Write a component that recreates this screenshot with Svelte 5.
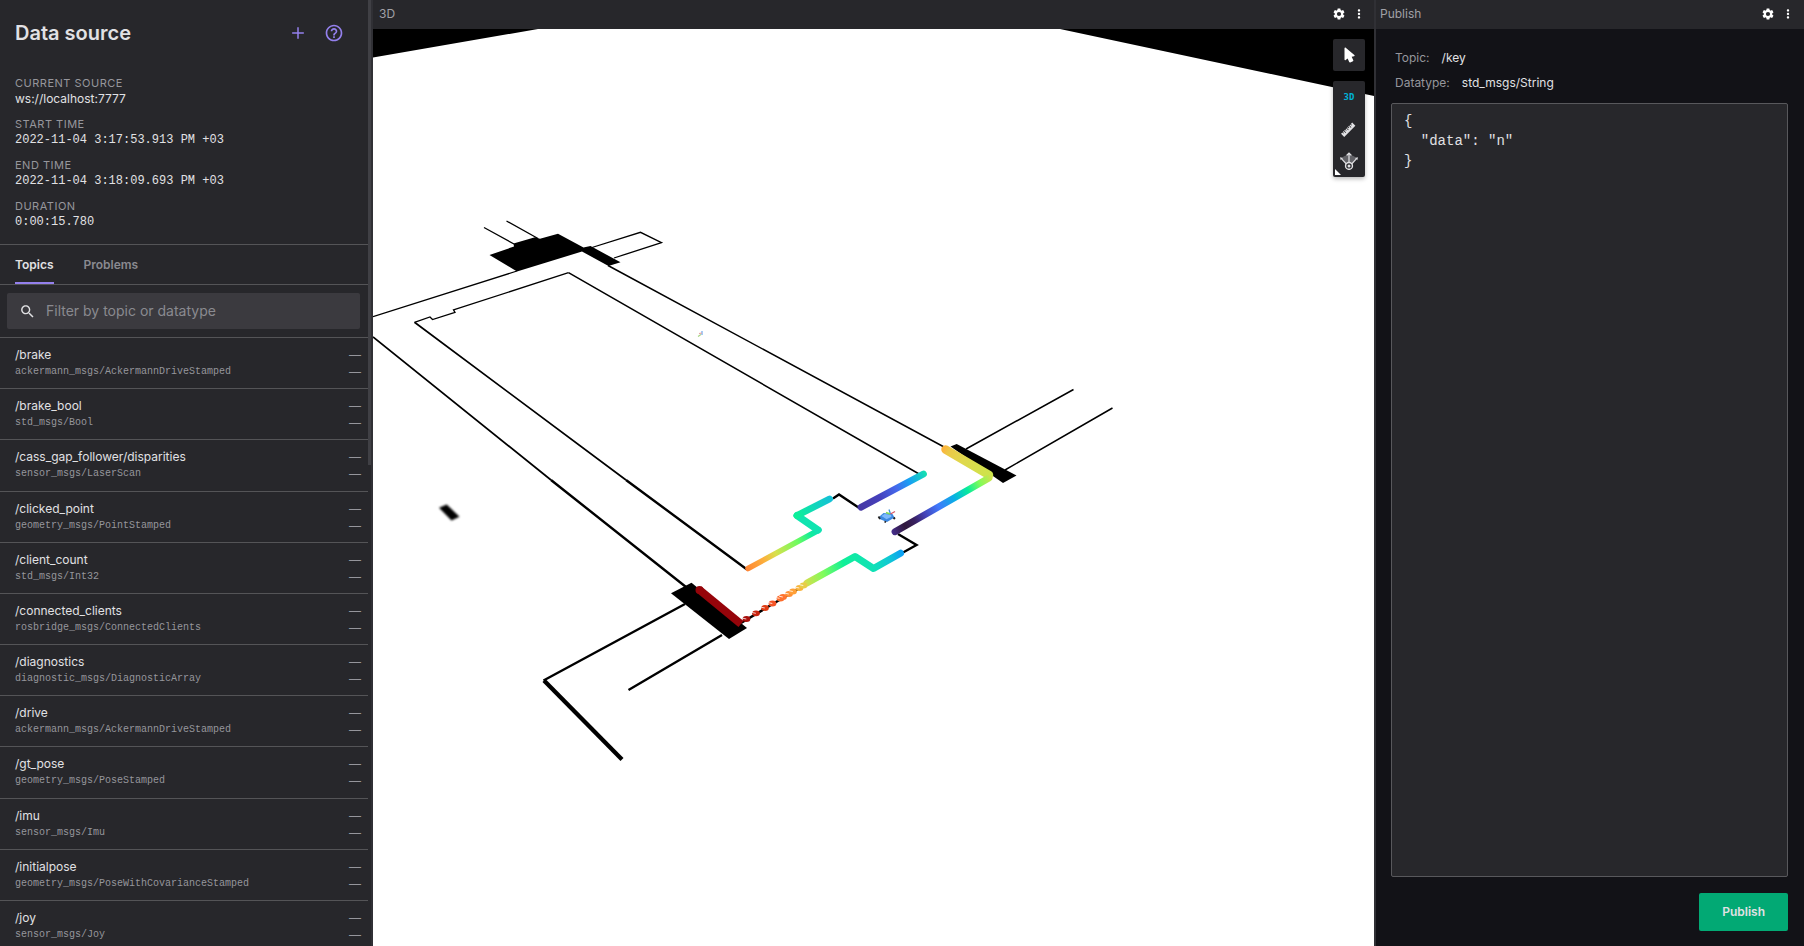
<script>
  const sourceInfo = [
    { label: 'Current source', value: 'ws://localhost:7777', mono: false },
    { label: 'Start time', value: '2022-11-04 3:17:53.913 PM +03', mono: true },
    { label: 'End time', value: '2022-11-04 3:18:09.693 PM +03', mono: true },
    { label: 'Duration', value: '0:00:15.780', mono: true }
  ];

  const topics = [
    ['/brake', 'ackermann_msgs/AckermannDriveStamped'],
    ['/brake_bool', 'std_msgs/Bool'],
    ['/cass_gap_follower/disparities', 'sensor_msgs/LaserScan'],
    ['/clicked_point', 'geometry_msgs/PointStamped'],
    ['/client_count', 'std_msgs/Int32'],
    ['/connected_clients', 'rosbridge_msgs/ConnectedClients'],
    ['/diagnostics', 'diagnostic_msgs/DiagnosticArray'],
    ['/drive', 'ackermann_msgs/AckermannDriveStamped'],
    ['/gt_pose', 'geometry_msgs/PoseStamped'],
    ['/imu', 'sensor_msgs/Imu'],
    ['/initialpose', 'geometry_msgs/PoseWithCovarianceStamped'],
    ['/joy', 'sensor_msgs/Joy']
  ];

  // Sparse laser returns along the far wall: x, y, colour
  const scanDots = [
    [746.5, 619, '#a8100c'], [756, 613.3, '#c82410'], [765, 608, '#e03c14'],
    [772.5, 603.5, '#f45426'], [780.5, 598.5, '#fc6c2c'], [783, 597, '#ff7430'],
    [789, 594, '#ff9036'], [793, 591.5, '#ffa038'], [799.5, 588, '#f8b43c'],
    [803.5, 585.5, '#e8cc48']
  ];

  let filter = $state('');
  let message = $state('{\n  "data": "n"\n}');
</script>

{#snippet gear()}
  <svg class="ic14" viewBox="0 0 24 24" aria-hidden="true"><path d="M19.14 12.94c.04-.3.06-.61.06-.94 0-.32-.02-.64-.07-.94l2.03-1.58c.18-.14.23-.41.12-.61l-1.92-3.32c-.12-.22-.37-.29-.59-.22l-2.39.96c-.5-.38-1.03-.7-1.62-.94l-.36-2.54c-.04-.24-.24-.41-.48-.41h-3.84c-.24 0-.43.17-.47.41l-.36 2.54c-.59.24-1.13.57-1.62.94l-2.39-.96c-.22-.08-.47 0-.59.22L2.74 8.87c-.12.21-.08.47.12.61l2.03 1.58c-.05.3-.09.63-.09.94s.02.64.07.94l-2.03 1.58c-.18.14-.23.41-.12.61l1.92 3.32c.12.22.37.29.59.22l2.39-.96c.5.38 1.03.7 1.62.94l.36 2.54c.05.24.24.41.48.41h3.84c.24 0 .44-.17.47-.41l.36-2.54c.59-.24 1.13-.56 1.62-.94l2.39.96c.22.08.47 0 .59-.22l1.92-3.32c.12-.22.07-.47-.12-.61l-2.01-1.58zM12 15.6A3.6 3.6 0 1 1 12 8.4a3.6 3.6 0 0 1 0 7.2z"/></svg>
{/snippet}

{#snippet dots()}
  <svg class="ic14" viewBox="0 0 24 24" aria-hidden="true"><path d="M12 8c1.100 0 2-.9 2-2s-.9-2-2-2-2 .9-2 2 .9 2 2 2zm0 2c-1.100 0-2 .9-2 2s.9 2 2 2 2-.9 2-2-.9-2-2-2zm0 6c-1.100 0-2 .9-2 2s.9 2 2 2 2-.9 2-2-.9-2-2-2z"/></svg>
{/snippet}

{#snippet panelBar(title)}
  <header class="bar">
    <h2>{title}</h2>
    <button aria-label="{title} settings">{@render gear()}</button>
    <button aria-label="{title} menu">{@render dots()}</button>
  </header>
{/snippet}

<div class="shell">
  <aside class="sidebar">
    <div class="content">
      <header class="title">
        <h1>Data source</h1>
        <button aria-label="Add source">
          <svg class="ic20" viewBox="0 0 24 24" aria-hidden="true"><path d="M19 12.900h-6.100V19h-1.800v-6.100H5v-1.800h6.100V5h1.800v6.100H19z"/></svg>
        </button>
        <button aria-label="Help">
          <svg class="ic20" viewBox="0 0 24 24" aria-hidden="true"><path d="M11 18h2v-2h-2v2zm1-16C6.480 2 2 6.480 2 12s4.480 10 10 10 10-4.480 10-10S17.520 2 12 2zm0 18c-4.410 0-8-3.590-8-8s3.590-8 8-8 8 3.590 8 8-3.590 8-8 8zm0-14c-2.210 0-4 1.790-4 4h2c0-1.100.9-2 2-2s2 .9 2 2c0 2-3 1.750-3 5h2c0-2.250 3-2.500 3-5 0-2.210-1.790-4-4-4z"/></svg>
        </button>
      </header>

      <dl class="info">
        {#each sourceInfo as item}
          <div>
            <dt>{item.label}</dt>
            <dd class:mono={item.mono}>{item.value}</dd>
          </div>
        {/each}
      </dl>

      <div class="tabs" role="tablist">
        <button role="tab" aria-selected="true" class="active">Topics</button>
        <button role="tab" aria-selected="false">Problems</button>
      </div>

      <div class="filter">
        <label>
          <svg class="search" viewBox="0 0 24 24" aria-hidden="true"><path d="M15.500 14h-.790l-.280-.270C15.410 12.590 16 11.110 16 9.500 16 5.910 13.090 3 9.500 3S3 5.910 3 9.500 5.910 16 9.500 16c1.610 0 3.090-.590 4.230-1.570l.270.280v.790l5 4.990L20.490 19l-4.990-5zm-6 0C7.010 14 5 11.990 5 9.500S7.010 5 9.500 5 14 7.010 14 9.500 11.990 14 9.500 14z"/></svg>
          <input type="text" placeholder="Filter by topic or datatype" aria-label="Filter by topic or datatype" bind:value={filter} />
        </label>
      </div>

      <ul class="topics">
        {#each topics as [name, type]}
          <li>
            <div class="names">
              <span class="name">{name}</span>
              <span class="type">{type}</span>
            </div>
            <div class="stats"><span>—</span><span>—</span></div>
          </li>
        {/each}
      </ul>
    </div>
    <div class="rail"><div class="thumb"></div></div>
  </aside>

  <main class="panel">
    {@render panelBar('3D')}
    <div class="stage">
      <svg class="scene" viewBox="373 29 1001 917" preserveAspectRatio="xMidYMid slice" role="img" aria-label="Map with laser scan">
        <defs>
          <linearGradient id="near" gradientUnits="userSpaceOnUse" x1="860" y1="508" x2="926" y2="473">
            <stop offset="0" stop-color="#4638a4"/><stop offset=".3" stop-color="#4540bc"/><stop offset=".55" stop-color="#4468ec"/><stop offset=".75" stop-color="#18a0f4"/><stop offset="1" stop-color="#14e0b0"/>
          </linearGradient>
          <linearGradient id="right" gradientUnits="userSpaceOnUse" x1="893" y1="533" x2="992" y2="477">
            <stop offset="0" stop-color="#442c88"/><stop offset=".12" stop-color="#30183c"/><stop offset=".22" stop-color="#382060"/><stop offset=".32" stop-color="#4440b4"/><stop offset=".46" stop-color="#4078fc"/><stop offset=".62" stop-color="#08b0e4"/><stop offset=".76" stop-color="#08ec9c"/><stop offset=".88" stop-color="#80fc58"/><stop offset="1" stop-color="#d4e04c"/>
          </linearGradient>
          <linearGradient id="top" gradientUnits="userSpaceOnUse" x1="944" y1="448" x2="992" y2="476">
            <stop offset="0" stop-color="#fcb43c"/><stop offset=".1" stop-color="#ecc848"/><stop offset=".4" stop-color="#e0d84c"/><stop offset="1" stop-color="#cce44c"/>
          </linearGradient>
          <linearGradient id="left" gradientUnits="userSpaceOnUse" x1="746" y1="569" x2="820" y2="530">
            <stop offset="0" stop-color="#ff8434"/><stop offset=".24" stop-color="#fcb03c"/><stop offset=".4" stop-color="#d8e04c"/><stop offset=".7" stop-color="#6cfc60"/><stop offset=".88" stop-color="#10ec9c"/><stop offset="1" stop-color="#10dcbc"/>
          </linearGradient>
          <linearGradient id="jog" gradientUnits="userSpaceOnUse" x1="796" y1="516" x2="832" y2="499">
            <stop offset="0" stop-color="#0cf098"/><stop offset="1" stop-color="#14c0d8"/>
          </linearGradient>
          <linearGradient id="low" gradientUnits="userSpaceOnUse" x1="805" y1="584" x2="902" y2="553">
            <stop offset="0" stop-color="#d8dc4c"/><stop offset=".2" stop-color="#80fc5c"/><stop offset=".42" stop-color="#10f098"/><stop offset=".7" stop-color="#10e0b8"/><stop offset=".86" stop-color="#10c8d4"/><stop offset="1" stop-color="#0ca0f4"/>
          </linearGradient>
          <filter id="soft"><feGaussianBlur stdDeviation=".8"/></filter>
        </defs>
        <rect x="-1000" y="-1000" width="4000" height="4000" fill="#fff"/>
        <path d="M-1000 29V290L373 57.500 538 29zM1060 29L1374 96 3000 441V29z"/>

        <g fill="none" stroke="#000">
          <path stroke-width="1.300" d="M484 227.500L514 244M506.500 221L538 238.500M592 247.500L640.500 232.300 661.500 242.700 614 258M373 316.700L517 271M414.500 322.300L430 317l2.500 2.500L455 312.300l-1.500-2.500L568.500 272.700"/>
          <path stroke-width="1.500" d="M568.500 272.700L920 474.500M608 265.500L945 447.500M966 449L1073.500 389.500M1005 470L1112.500 408"/>
          <path stroke-width="1.700" d="M414.500 322.300L626 480M373 337L551 480"/>
          <path stroke-width="2.400" d="M626 480L747 569.500M551 480L686 587M833 498.500L839 494.500 858.500 507.500M903 552.500L916.500 545 898 534M685 604L543.500 680.500M722 635L628.500 690M741 623L808 583"/>
          <path stroke-width="4.300" d="M544 680.500L622 759.500"/>
        </g>
        <path d="M489.500 255L514 246.500 513.500 243.500 535 237.300 540 238.700 558 233.700 583.500 247.500 590.500 246 620.500 262.300 608.500 266 582 251.500 517 271.500z"/>
        <path d="M950.500 446.500L956.700 444 1016.500 475.500 1003 483z"/>
        <path d="M671 593.300L691.500 582.700 747 628 729 639z"/>
        <path filter="url(#soft)" d="M439 507.700L446.700 504.500 459.500 516.700 451.500 520.500z"/>

        <g fill="none" stroke-linecap="round" stroke-linejoin="round">
          <path stroke="#96040a" stroke-width="8" stroke-linecap="butt" d="M699 589.500L741 624"/>
          <circle cx="699.500" cy="590" r="4" fill="#96040a"/>
          <path stroke="url(#left)" stroke-width="5.500" d="M748 568.500L819 530"/>
          <path stroke="#10e4b0" stroke-width="7" d="M797 515.500L818 530"/>
          <path stroke="url(#jog)" stroke-width="6.800" d="M797 515.500L829.500 499"/>
          <path stroke="url(#near)" stroke-width="6.800" d="M861 507.200L923.500 474"/>
          <path stroke="url(#top)" stroke-width="8.500" d="M945.500 449.500L989 475"/>
          <path stroke="url(#right)" stroke-width="6.800" d="M895 531.800L989 478"/>
          <path stroke="url(#low)" stroke-width="7" d="M807 583L855 556.500 873.500 568.500 900.500 553.200"/>
        </g>
        {#each scanDots as [x, y, color]}
          <ellipse cx={x} cy={y} rx="3.900" ry="2.900" fill={color}/>
          <path d="M{x - 4} {y - .8}l3.800 .8" stroke="#fff" stroke-width=".8"/>
        {/each}

        <g>
          <path d="M879.500 516.500l4-3.500 9 1 2 3.500-7.500 4.500-7.500-3z" fill="#3c88e0"/>
          <path d="M881.500 516l3-2 6.500.800.500 2-5 2.500z" fill="#7cb8fc"/>
          <path d="M878.500 516.500l1.500 2.500M884.500 521.500l1.500.8M893.500 519l1.500-1.500" stroke="#222" stroke-width="1.800"/>
          <path d="M890.500 514l-1.500-4.500" stroke="#3c90e0" stroke-width="1.300"/>
          <path d="M890 514l-4-1.500" stroke="#80d850" stroke-width="1.500"/>
          <path d="M890.500 514l4.500-2.500" stroke="#d85868" stroke-width="1.400"/>
        </g>
        <g fill="none" opacity=".8">
          <path d="M702 335v-4" stroke="#68a8f0" stroke-width="1.500"/>
          <path d="M699 333.500l3-.500" stroke="#e08888" stroke-width="1.200"/>
          <path d="M698 336.500l3-2" stroke="#90c860" stroke-width="1.200"/>
        </g>
      </svg>

      <div class="tools">
        <div class="group">
          <button aria-label="Select object">
            <svg class="ic18" viewBox="0 0 24 24" aria-hidden="true"><path fill="#fff" d="M13.640 21.970c-.500.230-1.100.020-1.330-.480l-2.180-4.740-2.510 2.020c-.170.140-.380.230-.620.230a1 1 0 0 1-1-1V3a1 1 0 0 1 1-1c.240 0 .470.090.640.230l.010-.010 11.490 9.640a1.001 1.001 0 0 1-.440 1.750l-3.160.620 2.200 4.730c.240.500.020 1.100-.480 1.330z"/></svg>
          </button>
        </div>
        <div class="group">
          <button class="mode">3D</button>
          <button aria-label="Measure">
            <svg class="ic18" viewBox="0 0 24 24" aria-hidden="true"><path fill="#e1e1e4" d="M1.390 18.360l1.770-1.770 1.410 1.420.710-.710-1.420-1.410 1.070-1.070 2.470 2.480.710-.710-2.480-2.470 1.060-1.060 1.410 1.410.710-.710-1.410-1.410 1.060-1.070 2.480 2.480.700-.710-2.470-2.470 1.060-1.060 1.410 1.410.710-.710-1.410-1.410 1.060-1.060 2.470 2.470.710-.710-2.470-2.470 1.060-1.060 1.410 1.410.710-.710-1.410-1.420 1.770-1.770 4.240 4.250L5.640 22.610z"/></svg>
          </button>
          <button class="publish-tool" aria-label="Publish pose">
            <svg class="ic18" viewBox="0 0 24 24" aria-hidden="true"><path fill="#626267" d="M1.500 8Q12 0 22.500 8L14 17H10z"/><path fill="none" stroke="#e1e1e4" stroke-width="1.600" d="M12 15V1.500M8.800 4.700L12 1.500l3.200 3.200M2.500 9.500L8.500 16M21.500 9.500L15.500 16"/><path fill="#e1e1e4" d="M0 7l4 1-3 3zM24 7l-4 1 3 3z"/><circle cx="12" cy="18.500" r="4.600" fill="#27272b" stroke="#e1e1e4" stroke-width="1.900"/><circle cx="12" cy="18.500" r="2" fill="#e1e1e4"/></svg>
          </button>
        </div>
      </div>
    </div>
  </main>

  <section class="panel publish">
    {@render panelBar('Publish')}
    <div class="form">
      <dl class="meta">
        <div><dt>Topic:</dt><dd>/key</dd></div>
        <div><dt>Datatype:</dt><dd>std_msgs/String</dd></div>
      </dl>
      <textarea aria-label="Message" spellcheck="false" bind:value={message}></textarea>
      <button class="send">Publish</button>
    </div>
  </section>
</div>

<style>
  :global(body) { margin: 0; background: #121217; }
  * { box-sizing: border-box; }
  .shell {
    display: grid;
    grid-template-columns: 373px minmax(0, 1001fr) minmax(0, 430fr);
    height: 100vh;
    overflow: hidden;
    font: 12px/16px Inter, sans-serif;
    color: #e1e1e4;
  }
  h1, h2, dl, dd, ul { margin: 0; padding: 0; }
  button { border: 0; padding: 0; background: none; color: inherit; font: inherit; cursor: pointer; }
  svg { display: block; fill: currentColor; }
  .ic14 { width: 14px; height: 14px; }
  .ic18 { width: 18px; height: 18px; }
  .ic20 { width: 20px; height: 20px; }

  .sidebar { display: flex; min-height: 0; background: #27272b; border-right: 2px solid #303035; }
  .content { flex: 1; min-width: 0; display: flex; flex-direction: column; overflow: hidden; }
  .rail { width: 3px; }
  .thumb { height: 465px; background: #404045; }

  .title { display: flex; align-items: center; gap: 16px; padding: 21px 24px 20px 15px; color: #9480ed; }
  h1 { flex: 1; font-size: 20px; line-height: 24px; font-weight: 600; color: #e1e1e4; }
  .info { display: flex; flex-direction: column; gap: 9px; padding: 10px 15px 14px; border-bottom: 1px solid #545457; }
  dt { color: #96969c; }
  .info dt { font-size: 11px; line-height: 16px; text-transform: uppercase; letter-spacing: 0.5px; }
  .info dd { line-height: 16px; }
  .mono { font-family: "Liberation Mono", monospace; }

  .tabs { display: flex; gap: 30px; height: 40px; padding: 0 15px; border-bottom: 1px solid #545457; }
  .tabs button { padding-top: 2px; font-weight: 600; color: #8a8a90; border-bottom: 2px solid transparent; }
  .tabs .active { color: #e1e1e4; border-bottom-color: #9480ed; }

  .filter { padding: 8px 8px 8px 7px; border-bottom: 1px solid #545457; }
  label { display: flex; align-items: center; gap: 10px; height: 36px; padding: 0 12px; border-radius: 2px; background: #3b3a3f; }
  .search { width: 17px; height: 17px; }
  input { flex: 1; min-width: 0; padding: 0; border: 0; outline: 0; background: none; color: #e1e1e4; font: 14px/20px Inter, sans-serif; }
  input::placeholder { color: #8a8a90; opacity: 1; }

  .topics { flex: 1; display: flex; flex-direction: column; margin-bottom: -6px; list-style: none; }
  li { flex: 1 0 51px; display: flex; justify-content: space-between; padding: 8px 7px 0 15px; border-bottom: 1px solid #545457; }
  .names, .stats { display: flex; flex-direction: column; }
  .name, .type, .stats span { line-height: 17px; white-space: nowrap; }
  .type { font-family: "Liberation Mono", monospace; font-size: 10px; color: #96969c; }
  .stats { color: #96969c; }

  .panel { display: flex; flex-direction: column; min-width: 0; min-height: 0; }
  .bar { display: flex; align-items: center; gap: 6px; height: 29px; padding: 0 8px 2px 6px; background: #27272b; color: #fff; }
  h2 { flex: 1; font-size: 12px; line-height: 16px; font-weight: 400; color: #a0a0a6; }
  .stage { position: relative; flex: 1; min-height: 0; background: #fff; }
  .scene { width: 100%; height: 100%; fill: #000; }
  .tools { position: absolute; top: 10px; right: 9px; display: flex; flex-direction: column; gap: 10px; }
  .group { display: flex; flex-direction: column; width: 32px; border-radius: 2px; background: #27272b; box-shadow: 0 2px 4px #0004; }
  .group button { position: relative; display: grid; place-items: center; height: 32px; }
  .group .mode { color: #00b4d8; font: 700 9px/12px "DejaVu Sans Mono", monospace; }
  .publish-tool::after { content: ""; position: absolute; left: 2px; bottom: 2px; border: 3px solid; border-color: transparent transparent #fff #fff; }

  .publish { background: #121217; border-left: 2px solid #303035; }
  .publish .bar { padding-left: 4px; padding-right: 9px; }
  .form { flex: 1; min-height: 0; display: flex; flex-direction: column; padding: 16px 16px 15px 15px; }
  .meta { display: flex; flex-direction: column; padding: 0 4px 8px; }
  .meta div { display: flex; gap: 12px; }
  .meta dt, .meta dd { line-height: 25px; }
  textarea {
    flex: 1; min-height: 0; resize: none; padding: 7px 12px; outline: 0;
    border: 1px solid #58585c; border-radius: 2px; background: #27272b; color: #e1e1e4;
    font: 14px/20px "Liberation Mono", monospace;
  }
  .send { align-self: flex-end; margin-top: 16px; height: 38px; padding: 0 23px; border-radius: 2px; background: #02a974; font-weight: 600; }
</style>
